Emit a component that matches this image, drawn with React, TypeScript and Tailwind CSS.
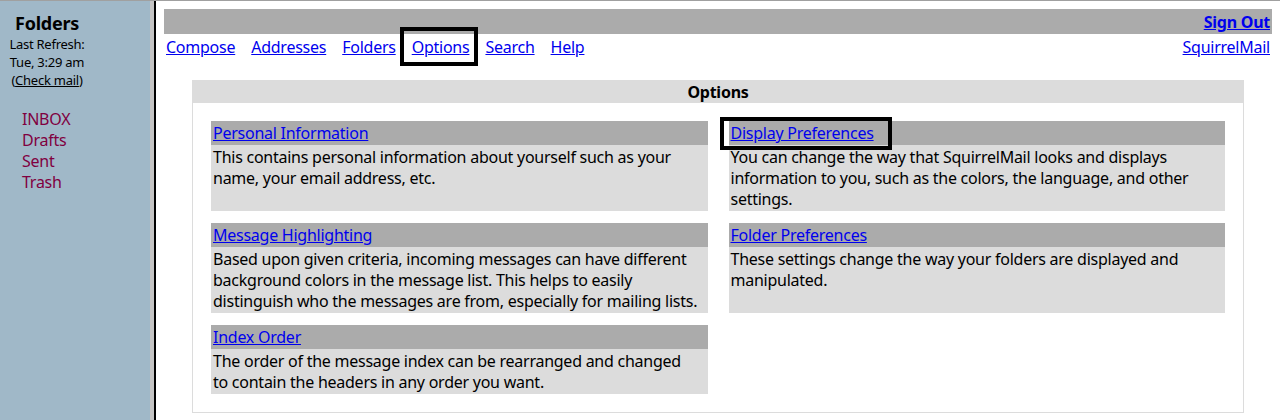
const font = { fontFamily: '"Noto Sans", "Liberation Sans", sans-serif' };

const cards = [
  {
    title: 'Personal Information',
    text: 'This contains personal information about yourself such as your name, your email address, etc.',
  },
  {
    title: 'Display Preferences',
    text: 'You can change the way that SquirrelMail looks and displays information to you, such as the colors, the language, and other settings.',
    marked: true,
  },
  {
    title: 'Message Highlighting',
    text: 'Based upon given criteria, incoming messages can have different background colors in the message list. This helps to easily distinguish who the messages are from, especially for mailing lists.',
  },
  {
    title: 'Folder Preferences',
    text: 'These settings change the way your folders are displayed and manipulated.',
  },
  {
    title: 'Index Order',
    text: 'The order of the message index can be rearranged and changed to contain the headers in any order you want.',
    narrow: true,
  },
];

const navLinks = ['Compose', 'Addresses', 'Folders', 'Options', 'Search', 'Help'];

function Sidebar() {
  return (
    <div className="w-[150px] shrink-0 bg-[#a0b8c8] text-black">
      <div className="w-[94px] pt-[10px] text-center">
        <div className="text-[18px] font-bold leading-[24px]">Folders</div>
        <div className="text-[13px] leading-[18px]">Last Refresh:</div>
        <div className="text-[13px] leading-[18px]">Tue, 3:29 am</div>
        <div className="text-[13px] leading-[18px]">
          (<a href="#" className="text-black underline">Check mail</a>)
        </div>
      </div>
      <ul className="mt-[20px] pl-[22px] text-[16px] leading-[21px] text-[#800040]">
        <li>INBOX</li>
        <li>Drafts</li>
        <li>Sent</li>
        <li>Trash</li>
      </ul>
    </div>
  );
}

function OptionCard({
  title,
  text,
  marked,
  narrow,
}: {
  title: string;
  text: string;
  marked?: boolean;
  narrow?: boolean;
}) {
  return (
    <div className="flex flex-col">
      <div className="relative h-[24px] bg-[#ababab] px-[2px] leading-[24px]">
        <a href="#" className="text-[#0000ee] underline">{title}</a>
        {marked && (
          <div className="pointer-events-none absolute left-[-9px] top-[-4px] h-[33px] w-[172px] border-[4px] border-black" />
        )}
      </div>
      <div
        className={`flex-1 bg-[#dcdcdc] pl-[2px] pt-[2px] pb-[1px] leading-[21px] text-black ${
          narrow ? 'pr-[24px]' : 'pr-[2px]'
        }`}
      >
        {text}
      </div>
    </div>
  );
}

export default function App() {
  return (
    <div
      className="flex h-[420px] w-[1280px] border-t border-[#a0a0a0] bg-white text-[16px] tracking-[-0.25px]"
      style={font}
    >
      <Sidebar />
      <div className="w-[4px] shrink-0 bg-[#c4c4c4]" />
      <div className="w-[2px] shrink-0 bg-black" />
      <div className="flex-1 px-[8px] pt-[8px]">
        <div className="flex h-[25px] items-center justify-end bg-[#ababab] px-[2px]">
          <a href="#" className="font-bold text-[#0000ee] underline">Sign Out</a>
        </div>
        <div className="flex h-[26px] items-center justify-between px-[2px]">
          <div className="flex gap-[16px]">
            {navLinks.map((l) => (
              <span key={l} className="relative">
                <a href="#" className="text-[#0000ee] underline">{l}</a>
                {l === 'Options' && (
                  <span className="pointer-events-none absolute left-[-12px] right-[-9px] top-[-8px] bottom-[-7px] border-[4px] border-black" />
                )}
              </span>
            ))}
          </div>
          <a href="#" className="text-[#0000ee] underline">SquirrelMail</a>
        </div>
        <div className="mx-[28px] mt-[20px] border border-[#dcdcdc]">
          <div className="h-[22px] bg-[#dcdcdc] text-center font-bold leading-[22px]">Options</div>
          <div className="grid grid-cols-2 gap-x-[21px] gap-y-[12px] px-[18px] pt-[18px] pb-[18px]">
            {cards.map((c) => (
              <OptionCard key={c.title} {...c} />
            ))}
          </div>
        </div>
      </div>
    </div>
  );
}
